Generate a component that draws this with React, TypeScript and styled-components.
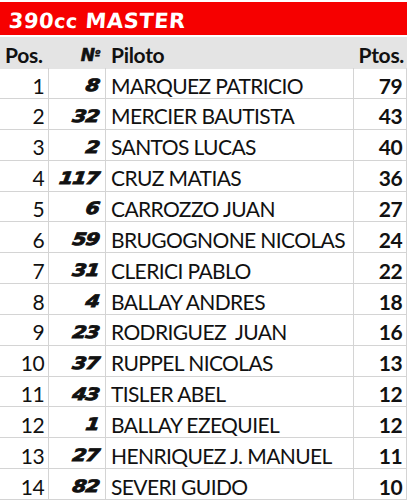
import React from "react";
import styled, { createGlobalStyle } from "styled-components";

const Global = createGlobalStyle`
  html, body { margin: 0; padding: 0; background: #ffffff; }
  body { font-family: Lato, "Open Sans", sans-serif; }
`;

const Sheet = styled.div`
  width: 407px;
  height: 500px;
  overflow: hidden;
  background: #ffffff;
  display: flex;
  flex-direction: column;
`;

const TitleBar = styled.div`
  height: 36px;
  margin-top: 2px;
  background: #f60000;
  display: flex;
  align-items: center;
  padding-left: 9px;
  border-bottom: 2px solid #ffffff;
  box-sizing: border-box;
`;

const Title = styled.div`
  color: #ffffff;
  font-family: "DejaVu Sans", sans-serif;
  font-weight: 700;
  font-size: 21px;
  letter-spacing: 0.5px;
  transform: skewX(-4deg);
  padding-top: 4px;
`;

const Small = styled.span`
  font-size: 19px;
`;

const Grid = styled.div`
  display: grid;
  grid-template-columns: 49px 57px 248px 53px;
  grid-auto-rows: 30.85px;
`;

const HeadCell = styled.div<{ $align?: string }>`
  height: 32px;
  background: #e4e4e4;
  display: flex;
  align-items: center;
  justify-content: ${(p) => p.$align || "flex-start"};
  padding: 3px 3px 0 5px;
  font-family: Lato, sans-serif;
  font-weight: 700;
  font-size: 21px;
  letter-spacing: -0.3px;
  color: #111;
  box-sizing: border-box;
`;

const HeadNum = styled(HeadCell)`
  font-style: italic;
  font-family: "DejaVu Sans", sans-serif;
  font-weight: 900;
  font-size: 17px;
  padding-right: 6px;
  -webkit-text-stroke: 0.6px #111;
`;

const Sup = styled.span`
  font-size: 10px;
  vertical-align: 6px;
`;

const Cell = styled.div<{ $align?: string; $bold?: boolean }>`
  display: flex;
  align-items: center;
  justify-content: ${(p) => p.$align || "flex-start"};
  padding: 4px 4px 0 5px;
  box-sizing: border-box;
  border-right: 1px solid #d4d4d4;
  border-bottom: 1px solid #d4d4d4;
  font-family: Lato, sans-serif;
  font-size: 21px;
  letter-spacing: -0.6px;
  font-weight: ${(p) => (p.$bold ? 700 : 400)};
  color: #111;
  white-space: pre;
`;

const RaceNum = styled(Cell)`
  font-family: "DejaVu Sans", sans-serif;
  font-style: italic;
  font-weight: 900;
  font-size: 17px;
  letter-spacing: -0.8px;
  padding-right: 6px;
`;

const NumText = styled.span`
  display: inline-block;
  transform: skewX(-8deg) scaleX(1.2);
  transform-origin: right center;
  -webkit-text-stroke: 0.9px #111;
`;

const rows: [number, string, string, number][] = [
  [1, "8", "MARQUEZ PATRICIO", 79],
  [2, "32", "MERCIER BAUTISTA", 43],
  [3, "2", "SANTOS LUCAS", 40],
  [4, "117", "CRUZ MATIAS", 36],
  [5, "6", "CARROZZO JUAN", 27],
  [6, "59", "BRUGOGNONE NICOLAS", 24],
  [7, "31", "CLERICI PABLO", 22],
  [8, "4", "BALLAY ANDRES", 18],
  [9, "23", "RODRIGUEZ  JUAN", 16],
  [10, "37", "RUPPEL NICOLAS", 13],
  [11, "43", "TISLER ABEL", 12],
  [12, "1", "BALLAY EZEQUIEL", 12],
  [13, "27", "HENRIQUEZ J. MANUEL", 11],
  [14, "82", "SEVERI GUIDO", 10],
];

export default function App() {
  return (
    <Sheet>
      <Global />
      <TitleBar>
        <Title>
          390<Small>cc</Small> MASTER
        </Title>
      </TitleBar>
      <Grid>
        <HeadCell>Pos.</HeadCell>
        <HeadNum $align="flex-end">
          N<Sup>º</Sup>
        </HeadNum>
        <HeadCell>Piloto</HeadCell>
        <HeadCell $align="flex-end">Ptos.</HeadCell>
        {rows.map(([pos, num, name, pts]) => (
          <React.Fragment key={pos}>
            <Cell $align="flex-end">{pos}</Cell>
            <RaceNum $align="flex-end">
              <NumText>{num}</NumText>
            </RaceNum>
            <Cell>{name}</Cell>
            <Cell $align="flex-end" $bold>
              {pts}
            </Cell>
          </React.Fragment>
        ))}
      </Grid>
    </Sheet>
  );
}
